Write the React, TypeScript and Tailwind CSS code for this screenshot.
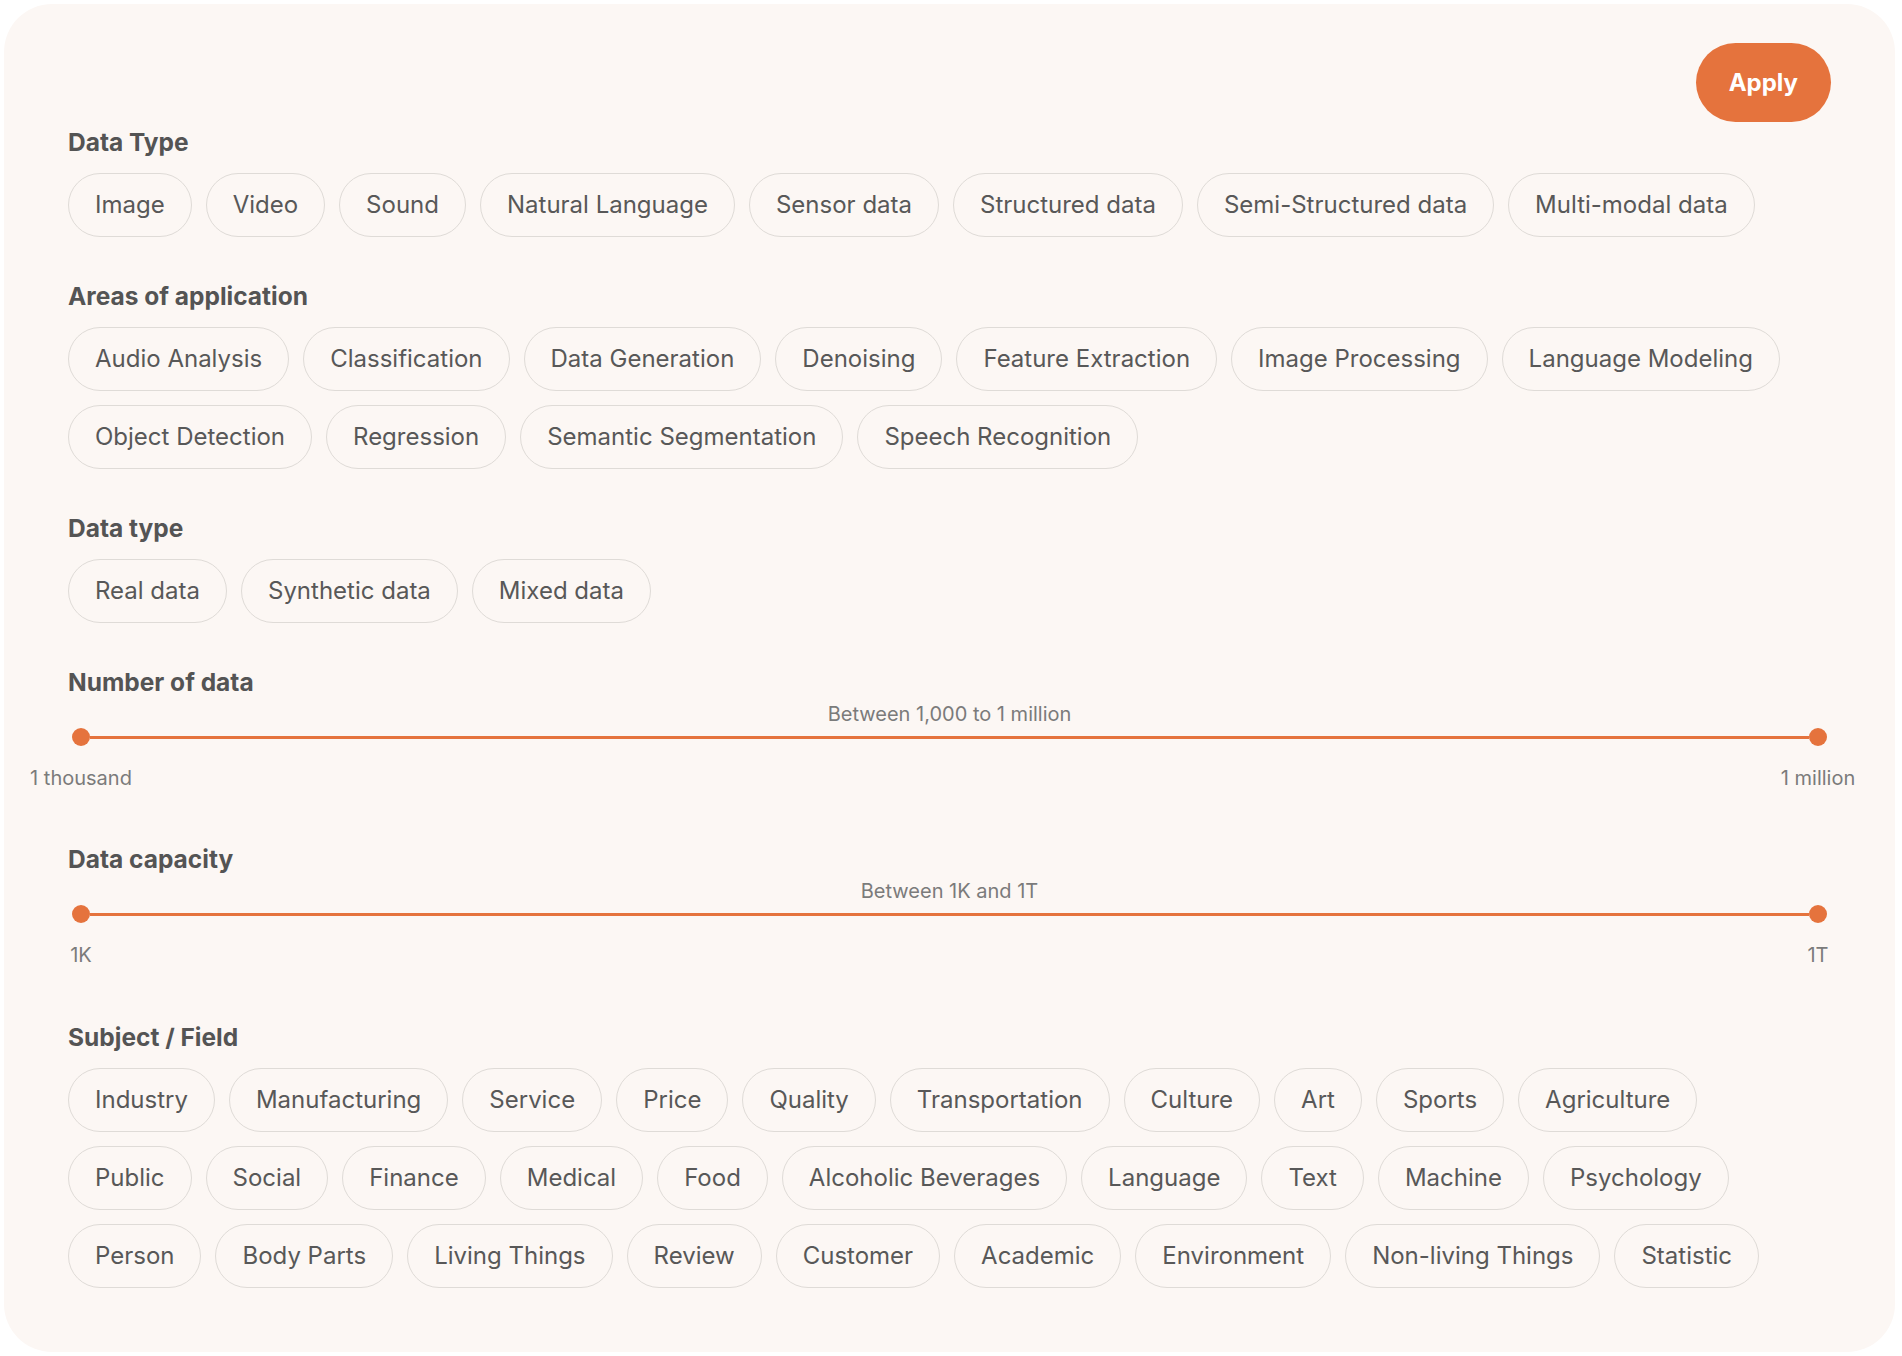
const dataTypes = [
  "Image",
  "Video",
  "Sound",
  "Natural Language",
  "Sensor data",
  "Structured data",
  "Semi-Structured data",
  "Multi-modal data",
];

const areas = [
  "Audio Analysis",
  "Classification",
  "Data Generation",
  "Denoising",
  "Feature Extraction",
  "Image Processing",
  "Language Modeling",
  "Object Detection",
  "Regression",
  "Semantic Segmentation",
  "Speech Recognition",
];

const sources = ["Real data", "Synthetic data", "Mixed data"];

const subjects = [
  "Industry",
  "Manufacturing",
  "Service",
  "Price",
  "Quality",
  "Transportation",
  "Culture",
  "Art",
  "Sports",
  "Agriculture",
  "Public",
  "Social",
  "Finance",
  "Medical",
  "Food",
  "Alcoholic Beverages",
  "Language",
  "Text",
  "Machine",
  "Psychology",
  "Person",
  "Body Parts",
  "Living Things",
  "Review",
  "Customer",
  "Academic",
  "Environment",
  "Non-living Things",
  "Statistic",
];

function Title({ children, className = "pt-[2px]" }: { children: string; className?: string }) {
  return (
    <h3 className={`${className} text-[24.5px] leading-[32px] font-bold text-[#545454]`}>{children}</h3>
  );
}

function ChipGroup({ title, items, className = "" }: { title: string; items: string[]; className?: string }) {
  return (
    <section className={className}>
      <Title>{title}</Title>
      <div className="mt-[15px] flex flex-wrap gap-x-[14px] gap-y-[14px]">
        {items.map((item) => (
          <button
            key={item}
            className="h-[64px] rounded-full border border-[#dfdbd7] px-[26px] text-[24px] leading-[32px] text-[#585858]"
          >
            {item}
          </button>
        ))}
      </div>
    </section>
  );
}

type RangeProps = {
  title: string;
  caption: string;
  min: string;
  max: string;
  className?: string;
};

function RangeField({ title, caption, min, max, className = "" }: RangeProps) {
  return (
    <section className={className}>
      <Title className="pt-0">{title}</Title>
      <p className="mt-[2px] text-center text-[20px] leading-[28px] text-[#7b7b7b]">{caption}</p>
      <div className="mx-[4px] flex h-[18px] items-center">
        <span className="h-[18px] w-[18px] shrink-0 rounded-full bg-[#e5733d]" />
        <span className="h-[3px] flex-1 bg-[#e5733d]" />
        <span className="h-[18px] w-[18px] shrink-0 rounded-full bg-[#e5733d]" />
      </div>
      <div className="mx-[13px] mt-[18px] flex justify-between text-[20px] leading-[28px] text-[#7b7b7b]">
        <div className="flex w-0 justify-center whitespace-nowrap">{min}</div>
        <div className="flex w-0 justify-center whitespace-nowrap">{max}</div>
      </div>
    </section>
  );
}

export default function App() {
  return (
    <div className="min-h-screen bg-white pt-[4px] pl-[4px] font-[Inter,sans-serif]">
      <div className="w-[1891px] rounded-[48px] bg-[#fcf7f4] px-[64px] pt-[39px] pb-[64px]">
        <div className="flex justify-end">
          <button className="h-[79px] rounded-full bg-[#e5733d] px-[33px] text-[24px] font-bold text-white">
            Apply
          </button>
        </div>
        <ChipGroup title="Data Type" items={dataTypes} className="mt-[2px]" />
        <ChipGroup title="Areas of application" items={areas} className="mt-[41px]" />
        <ChipGroup title="Data type" items={sources} className="mt-[41px]" />
        <RangeField
          title="Number of data"
          caption="Between 1,000 to 1 million"
          min="1 thousand"
          max="1 million"
          className="mt-[43px]"
        />
        <RangeField title="Data capacity" caption="Between 1K and 1T" min="1K" max="1T" className="mt-[51px]" />
        <ChipGroup title="Subject / Field" items={subjects} className="mt-[50px]" />
      </div>
    </div>
  );
}
